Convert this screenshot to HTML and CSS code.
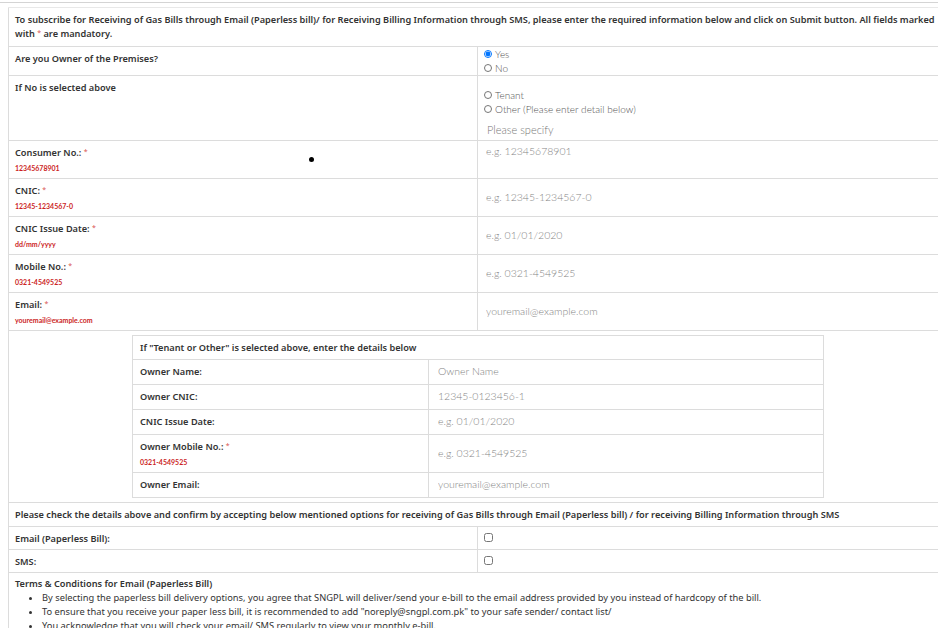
FILE: index.html
```html
<!DOCTYPE html>
<html lang="en">
<head>
    <meta charset="UTF-8">
    <meta name="viewport" content="width=device-width, initial-scale=1.0">
    <title>Paperless Bill Subscription</title>
    <link rel="stylesheet" href="styles.css">
</head>
<body>

    <div class="top-rule"></div>

    <div class="page">
        <table class="form-table">
            <colgroup>
                <col class="col-label">
                <col>
            </colgroup>
            <tr>
                <td colspan="2" class="intro">To subscribe for Receiving of Gas Bills through Email (Paperless bill)/ for Receiving Billing Information through SMS, please enter the required information below and click on Submit button. All fields marked with <span class="req">*</span> are mandatory.</td>
            </tr>
            <tr>
                <td class="label">Are you Owner of the Premises?</td>
                <td class="options">
                    <label class="opt"><input type="radio" name="owner" checked> Yes</label>
                    <label class="opt"><input type="radio" name="owner"> No</label>
                </td>
            </tr>
            <tr>
                <td class="label">If No is selected above</td>
                <td class="options other-opts">
                    <label class="opt"><input type="radio" name="kind"> Tenant</label>
                    <label class="opt"><input type="radio" name="kind"> Other (Please enter detail below)</label>
                    <input type="text" class="field specify" placeholder="Please specify">
                </td>
            </tr>
            <tr>
                <td class="label">Consumer No.: <span class="req">*</span><span class="hint">12345678901</span></td>
                <td class="input-cell top"><input type="text" class="field" placeholder="e.g. 12345678901"></td>
            </tr>
            <tr>
                <td class="label">CNIC: <span class="req">*</span><span class="hint">12345-1234567-0</span></td>
                <td class="input-cell"><input type="text" class="field" placeholder="e.g. 12345-1234567-0"></td>
            </tr>
            <tr>
                <td class="label">CNIC Issue Date: <span class="req">*</span><span class="hint">dd/mm/yyyy</span></td>
                <td class="input-cell"><input type="text" class="field" placeholder="e.g. 01/01/2020"></td>
            </tr>
            <tr>
                <td class="label">Mobile No.: <span class="req">*</span><span class="hint">0321-4549525</span></td>
                <td class="input-cell"><input type="text" class="field" placeholder="e.g. 0321-4549525"></td>
            </tr>
            <tr>
                <td class="label">Email: <span class="req">*</span><span class="hint">youremail@example.com</span></td>
                <td class="input-cell"><input type="text" class="field" placeholder="youremail@example.com"></td>
            </tr>
            <tr>
                <td colspan="2" class="nested">
                    <table class="owner-table">
                        <tr>
                            <td colspan="2" class="owner-head">If "Tenant or Other" is selected above, enter the details below</td>
                        </tr>
                        <tr>
                            <td class="olabel">Owner Name:</td>
                            <td class="ofield"><input type="text" class="field" placeholder="Owner Name"></td>
                        </tr>
                        <tr>
                            <td class="olabel">Owner CNIC:</td>
                            <td class="ofield"><input type="text" class="field" placeholder="12345-0123456-1"></td>
                        </tr>
                        <tr>
                            <td class="olabel">CNIC Issue Date:</td>
                            <td class="ofield"><input type="text" class="field" placeholder="e.g. 01/01/2020"></td>
                        </tr>
                        <tr>
                            <td class="olabel tall">Owner Mobile No.: <span class="req">*</span><span class="hint">0321-4549525</span></td>
                            <td class="ofield"><input type="text" class="field" placeholder="e.g. 0321-4549525"></td>
                        </tr>
                        <tr>
                            <td class="olabel">Owner Email:</td>
                            <td class="ofield"><input type="text" class="field" placeholder="youremail@example.com"></td>
                        </tr>
                    </table>
                </td>
            </tr>
            <tr>
                <td colspan="2" class="label confirm">Please check the details above and confirm by accepting below mentioned options for receiving of Gas Bills through Email (Paperless bill) / for receiving Billing Information through SMS</td>
            </tr>
            <tr>
                <td class="label short">Email (Paperless Bill):</td>
                <td class="check-cell"><input type="checkbox" class="check"></td>
            </tr>
            <tr>
                <td class="label short">SMS:</td>
                <td class="check-cell"><input type="checkbox" class="check"></td>
            </tr>
            <tr>
                <td colspan="2" class="terms">
                    <div class="terms-title">Terms &amp; Conditions for Email (Paperless Bill)</div>
                    <ul>
                        <li>By selecting the paperless bill delivery options, you agree that SNGPL will deliver/send your e-bill to the email address provided by you instead of hardcopy of the bill.</li>
                        <li>To ensure that you receive your paper less bill, it is recommended to add "noreply@sngpl.com.pk" to your safe sender/ contact list/</li>
                        <li>You acknowledge that you will check your email/ SMS regularly to view your monthly e-bill.</li>
                    </ul>
                </td>
            </tr>
        </table>
    </div>

    <span class="cursor-dot"></span>

</body>
</html>
```

FILE: styles.css
```css
html, body {
    margin: 0;
    overflow: hidden;
}
body {
    font-family: "Noto Sans", Arial, sans-serif;
    font-size: 9.2px;
    color: #333;
    background-color: #fff;
    position: relative;
}
.top-rule {
    height: 2px;
    border-bottom: 1px solid #d4d4d4;
}
.page {
    padding: 4px 0 0 8px;
}
.form-table {
    width: 940px;
    border-collapse: collapse;
    border-left: 1px solid #dcdcdc;
    border-top: 1px solid #e8e8e8;
}
.col-label {
    width: 469px;
}
.form-table > tbody > tr > td {
    border-bottom: 1px solid #dcdcdc;
    border-right: 1px solid #dcdcdc;
    padding: 5px 6px;
    vertical-align: top;
    line-height: 14px;
}
.intro {
    font-weight: 600;
    padding-right: 0 !important;
}
.label {
    font-weight: 600;
}
.req {
    color: #d9534f;
    font-weight: 400;
    font-size: 7px;
    line-height: 0;
    position: relative;
    top: -2px;
}
.hint {
    display: block;
    margin-top: 3px;
    font-family: "Lato", sans-serif;
    font-size: 7px;
    font-weight: 700;
    color: #cc1f1f;
    line-height: 10px;
}
.options {
    padding-top: 0 !important;
    padding-bottom: 0 !important;
}
.opt {
    display: flex;
    align-items: center;
    gap: 3px;
    font-family: "Lato", sans-serif;
    font-weight: 300;
    font-size: 10px;
    color: #555;
    height: 14px;
}
.opt input {
    width: 8px;
    height: 8px;
    margin: 0;
}
.other-opts {
    padding-top: 12px !important;
    padding-bottom: 2px !important;
}
.field {
    border: none;
    outline: none;
    padding: 0;
    background: transparent;
    font-family: "Lato", sans-serif;
    font-weight: 300;
    font-size: 10.5px;
    color: #555;
    width: 100%;
}
.field::placeholder {
    color: #858585;
}
.specify {
    margin-top: 4px;
    padding-left: 3px;
    height: 18px;
    font-size: 11px;
}
.specify::placeholder {
    color: #777;
}
.input-cell {
    vertical-align: middle !important;
    padding-left: 8px !important;
}
.input-cell.top {
    vertical-align: top !important;
    padding-top: 4px !important;
}
.nested {
    padding: 4px 0 !important;
}
.owner-table {
    width: 692px;
    margin: 0 auto;
    border-collapse: collapse;
    border: 1px solid #dcdcdc;
}
.owner-table td {
    border: 1px solid #dcdcdc;
    padding: 5px 7px;
    line-height: 14px;
    vertical-align: middle;
}
.owner-head {
    font-weight: 600;
    padding-bottom: 4px !important;
}
.olabel {
    width: 281px;
    font-weight: 600;
}
.olabel.tall {
    padding-top: 5px !important;
}
.olabel .hint {
    margin-top: 3px;
}
.ofield {
    padding-left: 9px !important;
}
.confirm {
    padding-top: 5px !important;
    padding-bottom: 4px !important;
}
.short {
    padding-bottom: 3px !important;
}
.check-cell {
    padding-top: 5px !important;
    padding-bottom: 3px !important;
}
.check {
    width: 9px;
    height: 9px;
    margin: 0;
}
.terms {
    border-bottom: none !important;
    font-weight: 400;
    font-size: 9.3px;
    padding-top: 4px !important;
}
.terms-title {
    font-weight: 600;
    font-size: 9.2px;
}
.terms ul {
    margin: 0;
    padding-left: 27px;
}
.terms li {
    line-height: 14px;
}
.cursor-dot {
    position: absolute;
    left: 309px;
    top: 157px;
    width: 5px;
    height: 5px;
    border-radius: 50%;
    background: #000;
}
```
